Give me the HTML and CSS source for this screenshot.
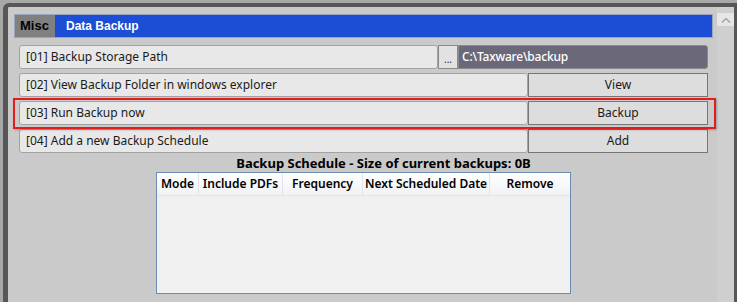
FILE: index.html
```html
<!DOCTYPE html>
<html lang="en">
<head>
    <meta charset="UTF-8">
    <title>Data Backup</title>
    <link rel="stylesheet" href="styles.css">
</head>
<body>
    <div class="frame">
        <div class="content">
            <div class="header">
                <span class="tab">Misc</span>
                <span class="title">Data Backup</span>
            </div>
            <div class="rows">
                <div class="row">
                    <div class="label">[01] Backup Storage Path</div>
                    <div class="browse">...</div>
                    <div class="path">C:\Taxware\backup</div>
                </div>
                <div class="row">
                    <div class="label">[02] View Backup Folder in windows explorer</div>
                    <div class="action">View</div>
                </div>
                <div class="row highlight">
                    <div class="label">[03] Run Backup now</div>
                    <div class="action">Backup</div>
                </div>
                <div class="row">
                    <div class="label">[04] Add a new Backup Schedule</div>
                    <div class="action">Add</div>
                </div>
            </div>
            <div class="caption">Backup Schedule - Size of current backups: 0B</div>
            <div class="schedule">
                <div class="cols">
                    <div class="col">Mode</div>
                    <div class="col">Include PDFs</div>
                    <div class="col">Frequency</div>
                    <div class="col">Next Scheduled Date</div>
                    <div class="col">Remove</div>
                </div>
                <div class="schedule-body"></div>
            </div>
        </div>
        <div class="scrollbar">
            <div class="arrow">
                <svg width="10" height="6" viewBox="0 0 10 6"><path d="M1 5.5 L5 1.5 L9 5.5" fill="none" stroke="#9a9a9a" stroke-width="1.2"/></svg>
            </div>
        </div>
    </div>
</body>
</html>
```

FILE: styles.css
```css
* {
    margin: 0;
    padding: 0;
    box-sizing: border-box;
}

body {
    background: #a8a8a8;
    font-family: 'Noto Sans', sans-serif;
    font-size: 12px;
    color: #1a1a1a;
    height: 302px;
    overflow: hidden;
}

.frame {
    margin: 3px 0 0 3px;
    height: 299px;
    border: solid #575757;
    border-width: 4px 3px 0 5px;
    border-top-left-radius: 6px;
    background: #cacaca;
    display: flex;
}

.content {
    flex: 1;
    padding: 7px 4px 0 6px;
}

.header {
    display: flex;
    height: 24px;
    border: 1px solid #9ea6bd;
    font-family: 'Liberation Sans', sans-serif;
    font-weight: bold;
    line-height: 22px;
}

.tab {
    width: 40px;
    background: #808080;
    color: #000;
    font-size: 13px;
    padding-left: 5px;
}

.title {
    flex: 1;
    background: #1b4dd5;
    color: #fff;
    font-size: 12px;
    padding-left: 11px;
}

.rows {
    margin: 7px 5px 0;
    display: flex;
    flex-direction: column;
    gap: 4px;
}

.row {
    display: flex;
    height: 24px;
    line-height: 22px;
}

.label {
    flex: 1;
    background: #e8e8e8;
    border: 1px solid #a3a3a3;
    border-radius: 3px;
    padding-left: 6px;
}

.browse {
    width: 20px;
    background: #e2e2e2;
    border: 1px solid #8a8a8a;
    text-align: center;
    font-size: 10px;
    line-height: 26px;
}

.path {
    width: 250px;
    background: #6a6879;
    border: 1px solid #8b8b8b;
    border-radius: 0 3px 3px 0;
    color: #fff;
    font-weight: 500;
    letter-spacing: -0.2px;
    padding-left: 3px;
}

.action {
    width: 180px;
    background: #dddddd;
    border: 1px solid #767676;
    text-align: center;
}

.highlight {
    position: relative;
}

.highlight::after {
    content: '';
    position: absolute;
    top: -3px;
    right: -8px;
    bottom: -4px;
    left: -6px;
    border: 2px solid #e41c1c;
    box-shadow: 1px 1px 2px rgba(0, 0, 0, 0.25);
}

.caption {
    margin: 2px 5px 0;
    padding-left: 40px;
    text-align: center;
    font-size: 13px;
    font-weight: bold;
    line-height: 17px;
    color: #000;
}

.schedule {
    width: 415px;
    margin: 0 auto;
    border: 1px solid #6b8db4;
}

.cols {
    display: grid;
    grid-template-columns: 42px 84px 80px 127px 80px;
    height: 23px;
    background: linear-gradient(#ffffff, #f0f2f5);
    border-bottom: 1px solid #e2e4e8;
}

.col {
    border-right: 1px solid #e2e4e8;
    text-align: center;
    font-weight: 600;
    line-height: 22px;
    color: #000;
}

.col:last-child {
    border-right: none;
}

.schedule-body {
    height: 97px;
    background: #f0f0f0;
}

.scrollbar {
    width: 17px;
    background: #cfcfcf;
    padding-top: 6px;
}

.arrow {
    height: 13px;
    background: #e6e6e6;
    display: flex;
    align-items: center;
    justify-content: center;
}
```
